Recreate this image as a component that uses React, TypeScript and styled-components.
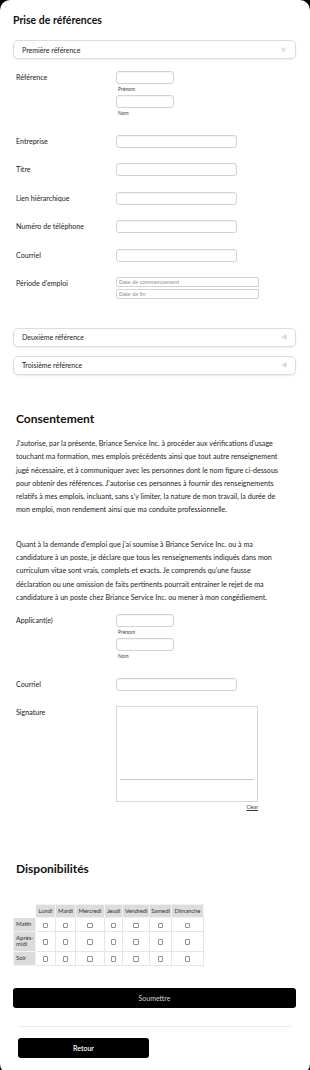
import React from "react";
import styled, { createGlobalStyle } from "styled-components";

const GlobalStyle = createGlobalStyle`
  html, body { margin: 0; padding: 0; background: #000; }
  body { font-family: Lato, "Noto Sans", sans-serif; color: #222; }
  * { box-sizing: border-box; }
`;

const Card = styled.div`
  min-height: 1070px;
  background: #fff;
  border-radius: 10px;
  padding: 13px 14px 16px 13px;
  display: flex;
  flex-direction: column;
`;

const Heading = styled.h2<{ $size: number; $top: number; $indent?: number }>`
  margin: ${(p) => p.$top}px 0 0 ${(p) => p.$indent ?? 0}px;
  font-size: ${(p) => p.$size}px;
  line-height: 15px;
  font-weight: 700;
  color: #111;
`;

const AccordionBar = styled.div<{ $top: number }>`
  margin-top: ${(p) => p.$top}px;
  height: 19px;
  border: 1px solid #dcdcdc;
  border-radius: 5px;
  box-shadow: 0 1px 2px rgba(0, 0, 0, 0.08);
  display: flex;
  align-items: center;
  justify-content: space-between;
  padding: 0 8px 0 8px;
  font-size: 7px;
  color: #222;
`;

const FormStack = styled.div<{ $top: number }>`
  margin-top: ${(p) => p.$top}px;
  display: flex;
  flex-direction: column;
  gap: 15.5px;
`;

const FormRow = styled.div`
  display: grid;
  grid-template-columns: 100px 1fr;
  padding-left: 3px;
  align-items: start;
`;

const Label = styled.label`
  font-size: 7.1px;
  line-height: 13px;
  color: #222;
`;

const Field = styled.div`
  display: flex;
  flex-direction: column;
  align-items: flex-start;
`;

const TextInput = styled.input<{ $w: number }>`
  width: ${(p) => p.$w}px;
  height: 13px;
  border: 1px solid #d2d2d2;
  border-radius: 3px;
  box-shadow: inset 0 1px 1px rgba(0, 0, 0, 0.04);
  padding: 0 3px;
  font-size: 6px;
  outline: none;
`;

const DateInput = styled.input`
  width: 143px;
  height: 10px;
  border: 1px solid #d2d2d2;
  border-radius: 2px;
  padding: 0 2px;
  font-family: "Liberation Sans", Arial, sans-serif;
  font-size: 5.5px;
  color: #333;
  outline: none;
  &::placeholder { color: #8a8a8a; }
`;

const DateStack = styled.div`
  display: flex;
  flex-direction: column;
  gap: 2px;
`;

const SubLabel = styled.span`
  font-size: 5px;
  line-height: 11px;
  padding-left: 2px;
  color: #444;
`;

const Paragraph = styled.p<{ $top: number }>`
  margin: ${(p) => p.$top}px 0 0 3px;
  font-size: 7.15px;
  line-height: 13.3px;
  color: #1c1c1c;
  white-space: nowrap;
`;

const SignaturePad = styled.div`
  width: 142px;
  height: 96px;
  border: 1px solid #d8d8d8;
  padding: 72px 3px 0;
`;

const SignatureLine = styled.div`
  height: 1px;
  background: #c8c8c8;
`;

const ClearLink = styled.a`
  width: 142px;
  text-align: right;
  font-size: 5px;
  line-height: 10px;
  color: #333;
  text-decoration: underline;
  cursor: pointer;
`;

const Table = styled.table`
  margin-top: 27.5px;
  width: 190px;
  border-collapse: collapse;
  table-layout: fixed;
  font-size: 6px;
  color: #333;
`;

const HeadCell = styled.th<{ $blank?: boolean }>`
  background: ${(p) => (p.$blank ? "#fff" : "#dcdcdc")};
  border: 1px solid ${(p) => (p.$blank ? "#fff" : "#f2f2f2")};
  font-weight: 400;
  line-height: 6.5px;
  padding: 3px 0;
  text-align: center;
  white-space: nowrap;
  letter-spacing: -0.1px;
`;

const RowHead = styled.th`
  background: #dcdcdc;
  border: 1px solid #f2f2f2;
  font-weight: 400;
  line-height: 6.5px;
  padding: 3px 2px;
  text-align: left;
`;

const Cell = styled.td`
  border: 1px solid #e6e6e6;
  text-align: center;
  padding: 0;
`;

const Check = styled.input`
  appearance: none;
  width: 5.5px;
  height: 5.5px;
  margin: 0;
  border: 1px solid #8f8f8f;
  border-radius: 1px;
  display: inline-block;
  vertical-align: middle;
  background: #fff;
`;

const SubmitButton = styled.button`
  margin-top: 22px;
  height: 20px;
  background: #000;
  color: #d4d4d4;
  border: none;
  border-radius: 3px;
  font-family: Lato, sans-serif;
  font-size: 7px;
`;

const Divider = styled.hr`
  margin: 18px 5px 0;
  border: none;
  height: 1px;
  background: #ececec;
`;

const BackButton = styled.button`
  margin: 11px 0 0 5px;
  width: 131px;
  height: 20px;
  background: #000;
  color: #fff;
  border: none;
  border-radius: 3px;
  font-family: Lato, sans-serif;
  font-size: 7px;
  font-weight: 600;
`;

const Arrow = ({ open }: { open: boolean }) => (
  <svg width="7" height="6" viewBox="0 0 7 6">
    <defs>
      <linearGradient id={open ? "gd" : "gl"} x1="0" y1="0" x2={open ? "0" : "1"} y2={open ? "1" : "0"}>
        <stop offset="0" stopColor="#ececec" />
        <stop offset="1" stopColor="#d2d2d2" />
      </linearGradient>
    </defs>
    {open ? (
      <polygon points="0.5,0.5 6.5,0.5 3.5,5.5" fill="url(#gd)" />
    ) : (
      <polygon points="0.5,3 6.5,0.3 6.5,5.7" fill="url(#gl)" />
    )}
  </svg>
);

const Accordion = ({ title, open, top }: { title: string; open: boolean; top: number }) => (
  <AccordionBar $top={top}>
    <span>{title}</span>
    <Arrow open={open} />
  </AccordionBar>
);

const NameField = () => (
  <Field>
    <TextInput $w={58} />
    <SubLabel>Prénom</SubLabel>
    <TextInput $w={58} />
    <SubLabel>Nom</SubLabel>
  </Field>
);

const Lines = ({ lines }: { lines: string[] }) => (
  <>
    {lines.map((l, i) => (
      <React.Fragment key={i}>
        {l}
        {i < lines.length - 1 && <br />}
      </React.Fragment>
    ))}
  </>
);

const consent1 = [
  "J'autorise, par la présente, Briance Service Inc. à procéder aux vérifications d'usage",
  "touchant ma formation, mes emplois précédents ainsi que tout autre renseignement",
  "jugé nécessaire, et à communiquer avec les personnes dont le nom figure ci-dessous",
  "pour obtenir des références. J'autorise ces personnes à fournir des renseignements",
  "relatifs à mes emplois, incluant, sans s'y limiter, la nature de mon travail, la durée de",
  "mon emploi, mon rendement ainsi que ma conduite professionnelle.",
];

const consent2 = [
  "Quant à la demande d'emploi que j'ai soumise à Briance Service Inc. ou à ma",
  "candidature à un poste, je déclare que tous les renseignements indiqués dans mon",
  "curriculum vitae sont vrais, complets et exacts. Je comprends qu'une fausse",
  "déclaration ou une omission de faits pertinents pourrait entrainer le rejet de ma",
  "candidature à un poste chez Briance Service Inc. ou mener à mon congédiement.",
];

const days = ["Lundi", "Mardi", "Mercredi", "Jeudi", "Vendredi", "Samedi", "Dimanche"];
const colWidths = [22, 20, 20, 29, 18, 27, 22, 32];
const periods = [
  { label: "Matin", h: 13 },
  { label: "Après-midi", h: 19 },
  { label: "Soir", h: 14 },
];

const refFields = ["Entreprise", "Titre", "Lien hiérarchique", "Numéro de téléphone", "Courriel"];

const App = () => {
  return (
    <>
      <GlobalStyle />
      <Card>
        <Heading $size={10.5} $top={0}>Prise de références</Heading>
        <Accordion title="Première référence" open top={12} />

        <FormStack $top={12}>
          <FormRow>
            <Label>Référence</Label>
            <NameField />
          </FormRow>
          {refFields.map((f) => (
            <FormRow key={f}>
              <Label>{f}</Label>
              <Field>
                <TextInput $w={121} />
              </Field>
            </FormRow>
          ))}
          <FormRow>
            <Label>Période d'emploi</Label>
            <DateStack>
              <DateInput placeholder="Date de commencement" />
              <DateInput placeholder="Date de fin" />
            </DateStack>
          </FormRow>
        </FormStack>

        <Accordion title="Deuxième référence" open={false} top={28.5} />
        <Accordion title="Troisième référence" open={false} top={9} />

        <Heading $size={12} $top={36.5} $indent={3}>Consentement</Heading>
        <Paragraph $top={11}>
          <Lines lines={consent1} />
        </Paragraph>
        <Paragraph $top={21}>
          <Lines lines={consent2} />
        </Paragraph>

        <FormStack $top={10}>
          <FormRow>
            <Label>Applicant(e)</Label>
            <NameField />
          </FormRow>
          <FormRow>
            <Label>Courriel</Label>
            <Field>
              <TextInput $w={121} />
            </Field>
          </FormRow>
          <FormRow>
            <Label>Signature</Label>
            <Field>
              <SignaturePad>
                <SignatureLine />
              </SignaturePad>
              <ClearLink>Clear</ClearLink>
            </Field>
          </FormRow>
        </FormStack>

        <Heading $size={12} $top={49} $indent={3}>Disponibilités</Heading>
        <Table>
          <colgroup>
            {colWidths.map((w, i) => (
              <col key={i} style={{ width: w }} />
            ))}
          </colgroup>
          <thead>
            <tr>
              <HeadCell $blank />
              {days.map((d) => (
                <HeadCell key={d}>{d}</HeadCell>
              ))}
            </tr>
          </thead>
          <tbody>
            {periods.map((p) => (
              <tr key={p.label} style={{ height: p.h }}>
                <RowHead>{p.label}</RowHead>
                {days.map((d) => (
                  <Cell key={d}>
                    <Check type="checkbox" />
                  </Cell>
                ))}
              </tr>
            ))}
          </tbody>
        </Table>

        <SubmitButton>Soumettre</SubmitButton>
        <Divider />
        <BackButton>Retour</BackButton>
      </Card>
    </>
  );
};

export default App;
